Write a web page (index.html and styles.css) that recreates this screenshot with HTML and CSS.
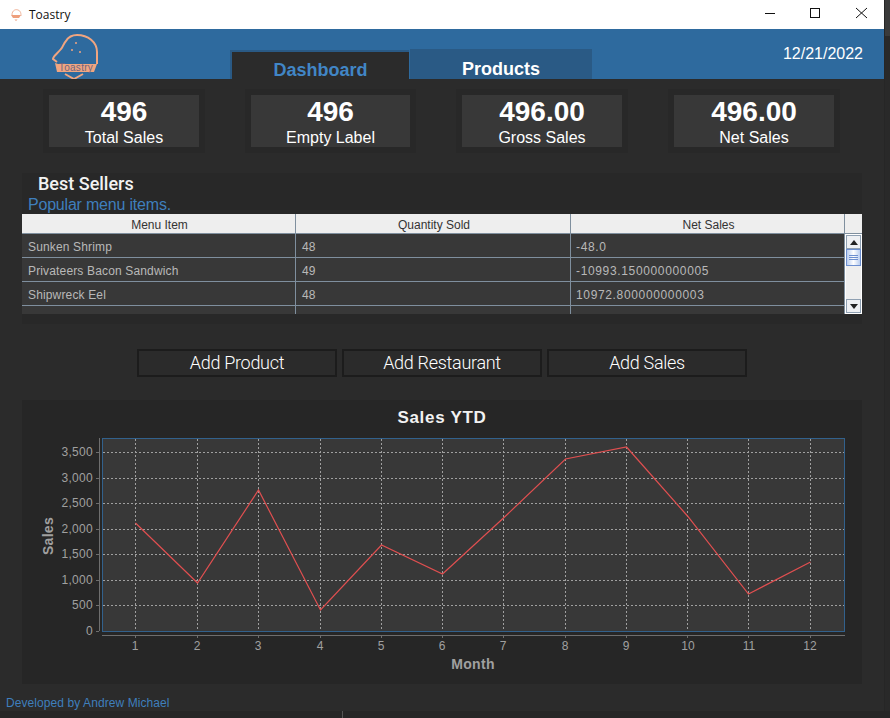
FILE: index.html
```html
<!DOCTYPE html>
<html lang="en">
<head>
  <meta charset="UTF-8">
  <meta name="viewport" content="width=device-width, initial-scale=1.0">
  <title>Toastry</title>
  <link rel="stylesheet" href="styles.css">
</head>
<body>
  <div class="window">

    <div class="titlebar">
      <svg class="app-icon" width="16" height="16" viewBox="0 0 16 16">
        <path d="M4 8 C4 3 8 2 10 3 C13 4 13 7 13 9" fill="none" stroke="#f0b49a" stroke-width="1"/>
        <path d="M3 8 H13 L11 11 H5 Z" fill="#ee9f7c"/>
        <path d="M7 12 L8 14 L9 12" fill="none" stroke="#f3c2ad" stroke-width="1"/>
      </svg>
      <span class="app-name">Toastry</span>
      <div class="window-buttons">
        <svg width="46" height="29" viewBox="0 0 46 29"><path d="M19 13.5 H29" stroke="#111" fill="none"/></svg>
        <svg width="46" height="29" viewBox="0 0 46 29"><rect x="18.5" y="8.5" width="9" height="9" stroke="#111" fill="none"/></svg>
        <svg width="46" height="29" viewBox="0 0 46 29"><path d="M18 8 L29 18 M29 8 L18 18" stroke="#111" fill="none"/></svg>
      </div>
    </div>

    <div class="header">
      <svg class="logo" width="50" height="50" viewBox="50 29 50 50">
        <path d="M57 62 L53 59 C53 56 58 53 61 49 C63 47 63 44 66 41 C69 36 73 35 77 35 C88 35 97 42 97 52 V64" fill="none" stroke="#f0a580" stroke-width="2"/>
        <path d="M55 63 L58 64 H97 L94 72 H57 Z" fill="#f0a580"/>
        <path d="M65 74 L74 79 L83 74" fill="none" stroke="#f0a580" stroke-width="2"/>
        <circle cx="76" cy="43" r="1" fill="#f0a580"/>
        <circle cx="72" cy="50" r="1" fill="#f0a580"/>
        <circle cx="80" cy="52" r="1" fill="#f0a580"/>
        <text x="76" y="71" text-anchor="middle" class="logo-text">Toastry</text>
      </svg>
      <div class="tabs">
        <div class="tab active">Dashboard</div>
        <div class="tab">Products</div>
      </div>
      <div class="date">12/21/2022</div>
    </div>

    <div class="stats">
      <div class="stat"><div class="stat-value">496</div><div class="stat-label">Total Sales</div></div>
      <div class="stat"><div class="stat-value">496</div><div class="stat-label">Empty Label</div></div>
      <div class="stat"><div class="stat-value">496.00</div><div class="stat-label">Gross Sales</div></div>
      <div class="stat"><div class="stat-value">496.00</div><div class="stat-label">Net Sales</div></div>
    </div>

    <div class="best-sellers">
      <div class="section-title">Best Sellers</div>
      <div class="section-sub">Popular menu items.</div>
      <div class="table-wrap">
        <div class="table-clip">
          <table class="items">
            <thead>
              <tr><th class="col-a">Menu Item</th><th class="col-b">Quantity Sold</th><th>Net Sales</th></tr>
            </thead>
            <tbody>
              <tr><td>Sunken Shrimp</td><td>48</td><td>-48.0</td></tr>
              <tr><td>Privateers Bacon Sandwich</td><td>49</td><td>-10993.150000000005</td></tr>
              <tr><td>Shipwreck Eel</td><td>48</td><td>10972.800000000003</td></tr>
              <tr><td>&nbsp;</td><td></td><td></td></tr>
            </tbody>
          </table>
        </div>
        <div class="scroll-col">
          <div class="scroll-corner"></div>
          <div class="scrollbar">
            <div class="scroll-btn"><span class="arrow-up"></span></div>
            <div class="scroll-thumb"><span></span><span></span><span></span></div>
            <div class="scroll-track"></div>
            <div class="scroll-btn"><span class="arrow-down"></span></div>
          </div>
        </div>
      </div>
    </div>

    <div class="actions">
      <button class="action">Add Product</button>
      <button class="action">Add Restaurant</button>
      <button class="action">Add Sales</button>
    </div>

    <div class="chart-panel">
      <svg class="chart" width="840" height="284" viewBox="22 400 840 284">
        <text x="442" y="423" text-anchor="middle" class="chart-title">Sales YTD</text>
        <rect x="102.5" y="438.5" width="742" height="193" fill="#383838" stroke="#32618c"/>
        <g class="grid">
          <path d="M103 452.5H844M103 478.5H844M103 503.5H844M103 529.5H844M103 554.5H844M103 580.5H844M103 605.5H844"/>
          <path d="M135.5 439V631M197.5 439V631M258.5 439V631M320.5 439V631M381.5 439V631M442.5 439V631M503.5 439V631M565.5 439V631M626.5 439V631M687.5 439V631M748.5 439V631M810.5 439V631"/>
        </g>
        <g class="axis">
          <path d="M99.5 438V631M96 452.5H99M96 478.5H99M96 503.5H99M96 529.5H99M96 554.5H99M96 580.5H99M96 605.5H99M96 631.5H99"/>
          <path d="M102 635.5H845M135.5 636V638M197.5 636V638M258.5 636V638M320.5 636V638M381.5 636V638M442.5 636V638M503.5 636V638M565.5 636V638M626.5 636V638M687.5 636V638M748.5 636V638M810.5 636V638"/>
        </g>
        <g class="y-labels">
          <text x="93" y="456">3,500</text>
          <text x="93" y="482">3,000</text>
          <text x="93" y="507">2,500</text>
          <text x="93" y="533">2,000</text>
          <text x="93" y="558">1,500</text>
          <text x="93" y="584">1,000</text>
          <text x="93" y="609">500</text>
          <text x="93" y="635">0</text>
        </g>
        <g class="x-labels">
          <text x="135" y="650">1</text>
          <text x="197" y="650">2</text>
          <text x="258" y="650">3</text>
          <text x="320" y="650">4</text>
          <text x="381" y="650">5</text>
          <text x="442" y="650">6</text>
          <text x="503" y="650">7</text>
          <text x="565" y="650">8</text>
          <text x="626" y="650">9</text>
          <text x="688" y="650">10</text>
          <text x="749" y="650">11</text>
          <text x="810" y="650">12</text>
        </g>
        <polyline class="line" points="135.5,523 197.5,583 258.5,490 320.5,610 381.5,545 442.5,574 503.5,518 565.5,459 626.5,447 687.5,516 748.5,594 810.5,562"/>
        <text x="473" y="669" text-anchor="middle" class="axis-title">Month</text>
        <text transform="translate(53 536) rotate(-90)" text-anchor="middle" class="axis-title">Sales</text>
      </svg>
    </div>

    <div class="footer">Developed by Andrew Michael</div>
  </div>
</body>
</html>
```

FILE: styles.css
```css
html, body {
  margin: 0;
  height: 718px;
  overflow: hidden;
}

/* whatever sits behind the app window: lighter top right, one thin line at the bottom */
body {
  background:
    linear-gradient(#555, #555) 342px 711px / 1px 7px no-repeat,
    linear-gradient(#3a3a3a 36px, #292929 36px) 885px 0 / 5px 711px no-repeat,
    #262626;
  font-family: 'Liberation Sans', Arial, sans-serif;
}

.window {
  width: 884px;
  height: 711px;
  background-color: #2b2b2b;
}

/* title bar */
.titlebar {
  height: 29px;
  background-color: #fff;
  display: flex;
  align-items: center;
}

.app-icon {
  margin-left: 8px;
}

.app-name {
  margin-left: 5px;
  font-family: 'Open Sans', sans-serif;
  font-size: 12px;
  color: #111;
}

.window-buttons {
  margin-left: auto;
  display: flex;
}

/* blue header */
.header {
  height: 50px;
  background-color: #2e6a9e;
  display: flex;
}

.logo {
  margin-left: 50px;
}

.logo-text {
  font-family: 'Liberation Sans', sans-serif;
  font-size: 10px;
  letter-spacing: 0.3px;
  fill: #6f6580;
}

.tabs {
  margin-left: 131px;
  display: flex;
  align-items: flex-end;
}

.tab {
  box-sizing: border-box;
  width: 182px;
  height: 30px;
  background-color: #2a5a85;
  color: #fff;
  font-size: 18px;
  font-weight: bold;
  text-align: center;
  line-height: 41px;
}

.tab.active {
  width: 179px;
  margin-left: -1px;
  margin-right: 1px;
  height: 29px;
  background-color: #2b2b2b;
  color: #4186c6;
  border-top: 2px solid #2a5a85;
  border-left: 2px solid #2a5a85;
  line-height: 37px;
}

.date {
  margin-left: auto;
  margin-right: 21px;
  margin-top: 15px;
  color: #fff;
  font-size: 16px;
  line-height: 20px;
}

/* stat cards */
.stats {
  display: grid;
  grid-template-columns: 162px 171px 172px 172px;
  gap: 40px;
  padding: 10px 0 0 43px;
}

.stat {
  box-sizing: border-box;
  height: 64px;
  border: 6px solid #282828;
  background-color: #383838;
  padding-top: 2px;
  text-align: center;
  color: #fff;
}

.stat-value {
  font-size: 28px;
  font-weight: bold;
  line-height: 30px;
}

.stat-label {
  margin-top: 1px;
  font-size: 16px;
  line-height: 19px;
}

/* best sellers table */
.best-sellers {
  margin: 20px 0 0 22px;
  width: 840px;
  height: 151px;
  background-color: #282828;
}

.section-title {
  padding-left: 16px;
  height: 21px;
  font-family: Roboto, sans-serif;
  font-size: 18px;
  font-weight: 500;
  line-height: 22px;
  color: #f2f2f2;
}

.section-sub {
  padding-left: 6px;
  height: 20px;
  font-size: 16px;
  letter-spacing: -0.2px;
  line-height: 22px;
  color: #3f7fbd;
}

.table-wrap {
  display: flex;
  height: 100px;
}

.table-clip {
  width: 823px;
  height: 100px;
  overflow: hidden;
}

.items {
  width: 823px;
  table-layout: fixed;
  border-collapse: separate;
  border-spacing: 0;
  font-size: 12px;
}

.items th {
  box-sizing: border-box;
  height: 20px;
  padding: 3px 0 0 2px;
  background-color: #eee;
  color: #333;
  font-weight: normal;
  border-right: 1px solid #7f8f9e;
  border-bottom: 1px solid #7f8f9e;
}

.items td {
  box-sizing: border-box;
  height: 24px;
  padding: 3px 0 0 6px;
  background-color: #383838;
  color: #b8b8b8;
  letter-spacing: 0.15px;
  border-right: 1px solid #7f8f9e;
  border-bottom: 1px solid #7f8f9e;
}

.items td:nth-child(3) {
  padding-left: 5px;
  letter-spacing: 0.65px;
}

.col-a {
  width: 274px;
}

.col-b {
  width: 275px;
}

.scroll-col {
  width: 17px;
}

.scroll-corner {
  height: 19px;
  background-color: #eee;
  border-bottom: 1px solid #7f8f9e;
}

.scrollbar {
  box-sizing: border-box;
  height: 80px;
  background-color: #fff;
  padding: 1px;
  display: flex;
  flex-direction: column;
}

.scroll-btn {
  height: 14px;
  background-color: #eef0f3;
  border: 1px solid #8fa0b2;
  box-sizing: border-box;
  display: flex;
  align-items: center;
  justify-content: center;
}

.arrow-up, .arrow-down {
  width: 0;
  height: 0;
  border-left: 4px solid transparent;
  border-right: 4px solid transparent;
}

.arrow-up {
  border-bottom: 5px solid #222;
}

.arrow-down {
  border-top: 5px solid #222;
}

.scroll-thumb {
  box-sizing: border-box;
  height: 17px;
  border: 1px solid #6d8fd0;
  background: linear-gradient(to right, #b9cdf0, #fff 50%, #b9cdf0);
  display: flex;
  flex-direction: column;
  align-items: center;
  justify-content: center;
  gap: 1px;
}

.scroll-thumb span {
  width: 9px;
  height: 1px;
  background-color: #6d8fd0;
}

.scroll-track {
  flex: 1;
  background-color: #eee;
}

/* buttons */
.actions {
  display: flex;
  gap: 5px;
  padding: 25px 0 0 137px;
}

.action {
  box-sizing: border-box;
  width: 200px;
  height: 28px;
  padding: 0 0 2px;
  background-color: #2b2b2b;
  border: 2px solid #1c1c1c;
  color: #fff;
  font-family: Roboto, sans-serif;
  font-size: 18px;
  font-weight: 300;
  letter-spacing: -0.3px;
}

/* chart */
.chart-panel {
  margin: 23px 0 0 22px;
  width: 840px;
  height: 284px;
  background-color: #262626;
}

.chart {
  display: block;
}

.chart-title {
  font-family: 'Liberation Sans', sans-serif;
  font-size: 17px;
  font-weight: bold;
  letter-spacing: 0.7px;
  fill: #f2f2f2;
}

.grid path {
  fill: none;
  stroke: #a0a0a0;
  stroke-dasharray: 2 2;
}

.axis path {
  fill: none;
  stroke: #6e6e6e;
}

.y-labels text {
  font-size: 12px;
  text-anchor: end;
  fill: #a0a0a0;
  letter-spacing: 0.3px;
}

.x-labels text {
  font-size: 12px;
  text-anchor: middle;
  fill: #a0a0a0;
}

.line {
  fill: none;
  stroke: #e04f50;
  stroke-width: 1.2;
}

.axis-title {
  font-size: 14px;
  font-weight: bold;
  letter-spacing: 0.3px;
  fill: #a0a0a0;
}

/* footer */
.footer {
  padding: 11px 0 0 6px;
  font-size: 12px;
  letter-spacing: 0.08px;
  line-height: 16px;
  color: #3f7fbd;
}
```
